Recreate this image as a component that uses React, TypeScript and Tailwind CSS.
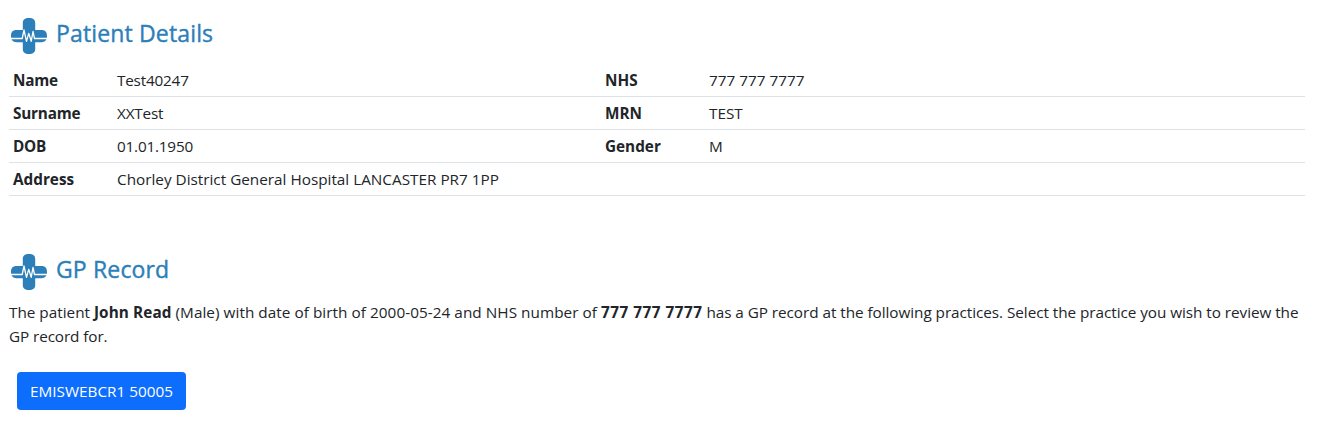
const details = [
  { label: "Name", value: "Test40247", label2: "NHS", value2: "777 777 7777" },
  { label: "Surname", value: "XXTest", label2: "MRN", value2: "TEST" },
  { label: "DOB", value: "01.01.1950", label2: "Gender", value2: "M" },
];

function MedicalCross() {
  return (
    <svg viewBox="0 0 36 36" className="w-9 h-9 shrink-0" fill="none">
      <path
        d="M11.800 12V5c0-3.400 2-5 6.200-5s6.200 1.600 6.200 5v7h6.300c3.700 0 5.500 2 5.500 6s-1.800 6.200-5.500 6.200h-6.300V31c0 3.400-2 5-6.200 5s-6.200-1.600-6.200-5v-6.800H5.500C1.800 24.200 0 22 0 18s1.800-6 5.500-6h6.300z"
        fill="#2c7fb8"
      />
      <path
        d="M0 20.500h11.200L13 12l2.500 11.300 2.200-8 2.500 8L22 13.500l1.500 7H36"
        stroke="#fff"
        strokeWidth="1.300"
        strokeLinejoin="round"
      />
    </svg>
  );
}

function SectionTitle({ title }: { title: string }) {
  return (
    <div className="flex items-start gap-[9px] pl-0.5 h-[46px] text-[#2c7fb8]">
      <MedicalCross />
      <h4 className="-mt-px text-[23px] leading-8 font-medium tracking-[0.15px] [-webkit-text-stroke:0.4px]">{title}</h4>
    </div>
  );
}

export default function App() {
  return (
    <div className="h-[428px] overflow-hidden bg-white pl-[9px] pt-[18px] pr-[27px] font-['Open_Sans',sans-serif] text-[15.3px] leading-6 text-[#212529]">
      <SectionTitle title="Patient Details" />
      <table className="w-full table-fixed border-separate border-spacing-0 text-left [&_td]:border-b [&_td]:border-[#dee2e6] [&_th]:border-b [&_th]:border-[#dee2e6]">
        <colgroup>
          <col className="w-[104px]" />
          <col className="w-[488px]" />
          <col className="w-[104px]" />
          <col />
        </colgroup>
        <tbody>
          {details.map((d) => (
            <tr key={d.label}>
              <th className="p-1 font-bold tracking-[-0.2px]">{d.label}</th>
              <td className="p-1 tracking-[-0.2px]">{d.value}</td>
              <th className="p-1 font-bold">{d.label2}</th>
              <td className="p-1">{d.value2}</td>
            </tr>
          ))}
          <tr>
            <th className="p-1 font-bold">Address</th>
            <td className="p-1" colSpan={3}>Chorley District General Hospital LANCASTER PR7 1PP</td>
          </tr>
        </tbody>
      </table>

      <div className="pt-[58px]">
        <SectionTitle title="GP Record" />
        <p>
          <span className="whitespace-nowrap">
            The patient <b className="tracking-[0.1px]">John Read</b> <span className="tracking-[0.05px]">(Male) with date of birth of 2000-05-24 and NHS number of </span>
            <b className="tracking-[0.5px]">777 777 7777</b>
            <span className="tracking-[-0.05px]"> has a GP record at the following practices. Select the practice you wish to review the</span>
          </span>{" "}
          <span className="tracking-[-0.1px]">GP record for.</span>
        </p>
        <button className="mt-6 ml-2 h-[38px] w-[169px] rounded bg-[#0d6efd] text-white whitespace-nowrap">EMISWEBCR1 50005</button>
      </div>
    </div>
  );
}
